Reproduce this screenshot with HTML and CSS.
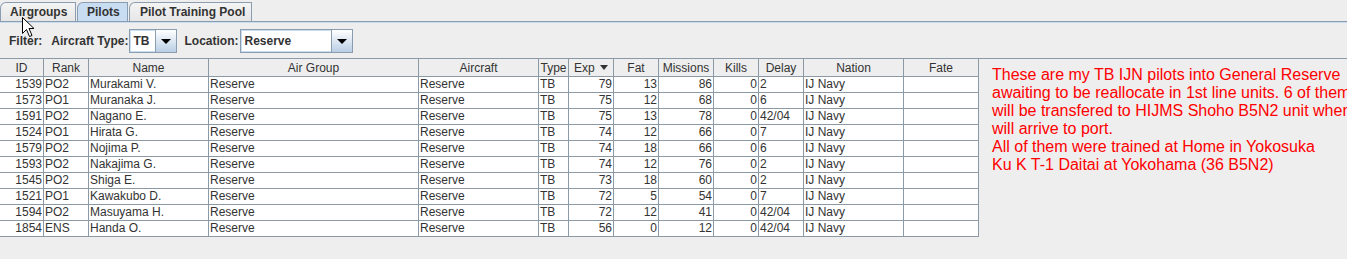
FILE: index.html
```html
<!DOCTYPE html>
<html lang="en">

<head>
  <meta charset="UTF-8">
  <title>Pilots</title>
  <link rel="stylesheet" href="styles.css">
</head>

<body>

  <div id="window">
    <!-- tabs -->
    <div class="tabs">
      <div class="tab">Airgroups</div>
      <div class="tab tab-on">Pilots</div>
      <div class="tab">Pilot Training Pool</div>
    </div>
    <div class="tab-line"></div>

    <!-- filter -->
    <div class="filter">
      <span class="lbl">Filter:</span>
      <span class="lbl">Aircraft Type:</span>
      <div class="combo combo-type">
        <div class="combo-val">TB</div>
        <div class="combo-btn"><span class="tri"></span></div>
      </div>
      <span class="lbl lbl-loc">Location:</span>
      <div class="combo combo-loc">
        <div class="combo-val">Reserve</div>
        <div class="combo-btn"><span class="tri"></span></div>
      </div>
    </div>

    <div class="main">
      <table class="grid">
        <colgroup>
          <col style="width:44px">
          <col style="width:45px">
          <col style="width:120px">
          <col style="width:210px">
          <col style="width:120px">
          <col style="width:30px">
          <col style="width:45px">
          <col style="width:45px">
          <col style="width:55px">
          <col style="width:45px">
          <col style="width:45px">
          <col style="width:100px">
          <col style="width:75px">
        </colgroup>
        <thead>
          <tr>
            <th>ID</th>
            <th>Rank</th>
            <th>Name</th>
            <th>Air Group</th>
            <th>Aircraft</th>
            <th>Type</th>
            <th>Exp <span class="sort"></span></th>
            <th>Fat</th>
            <th>Missions</th>
            <th>Kills</th>
            <th>Delay</th>
            <th>Nation</th>
            <th>Fate</th>
          </tr>
        </thead>
        <tbody>
          <tr><td class="n">1539</td><td>PO2</td><td>Murakami V.</td><td>Reserve</td><td>Reserve</td><td>TB</td><td class="n">79</td><td class="n">13</td><td class="n">86</td><td class="n">0</td><td>2</td><td>IJ Navy</td><td></td></tr>
          <tr><td class="n">1573</td><td>PO1</td><td>Muranaka J.</td><td>Reserve</td><td>Reserve</td><td>TB</td><td class="n">75</td><td class="n">12</td><td class="n">68</td><td class="n">0</td><td>6</td><td>IJ Navy</td><td></td></tr>
          <tr><td class="n">1591</td><td>PO2</td><td>Nagano E.</td><td>Reserve</td><td>Reserve</td><td>TB</td><td class="n">75</td><td class="n">13</td><td class="n">78</td><td class="n">0</td><td>42/04</td><td>IJ Navy</td><td></td></tr>
          <tr><td class="n">1524</td><td>PO1</td><td>Hirata G.</td><td>Reserve</td><td>Reserve</td><td>TB</td><td class="n">74</td><td class="n">12</td><td class="n">66</td><td class="n">0</td><td>7</td><td>IJ Navy</td><td></td></tr>
          <tr><td class="n">1579</td><td>PO2</td><td>Nojima P.</td><td>Reserve</td><td>Reserve</td><td>TB</td><td class="n">74</td><td class="n">18</td><td class="n">66</td><td class="n">0</td><td>6</td><td>IJ Navy</td><td></td></tr>
          <tr><td class="n">1593</td><td>PO2</td><td>Nakajima G.</td><td>Reserve</td><td>Reserve</td><td>TB</td><td class="n">74</td><td class="n">12</td><td class="n">76</td><td class="n">0</td><td>2</td><td>IJ Navy</td><td></td></tr>
          <tr><td class="n">1545</td><td>PO2</td><td>Shiga E.</td><td>Reserve</td><td>Reserve</td><td>TB</td><td class="n">73</td><td class="n">18</td><td class="n">60</td><td class="n">0</td><td>2</td><td>IJ Navy</td><td></td></tr>
          <tr><td class="n">1521</td><td>PO1</td><td>Kawakubo D.</td><td>Reserve</td><td>Reserve</td><td>TB</td><td class="n">72</td><td class="n">5</td><td class="n">54</td><td class="n">0</td><td>7</td><td>IJ Navy</td><td></td></tr>
          <tr><td class="n">1594</td><td>PO2</td><td>Masuyama H.</td><td>Reserve</td><td>Reserve</td><td>TB</td><td class="n">72</td><td class="n">12</td><td class="n">41</td><td class="n">0</td><td>42/04</td><td>IJ Navy</td><td></td></tr>
          <tr><td class="n">1854</td><td>ENS</td><td>Handa O.</td><td>Reserve</td><td>Reserve</td><td>TB</td><td class="n">56</td><td class="n">0</td><td class="n">12</td><td class="n">0</td><td>42/04</td><td>IJ Navy</td><td></td></tr>
        </tbody>
      </table>

      <!-- notes -->
      <div class="notes">
        <p>These are my TB IJN pilots into General Reserve awaiting to be reallocate in 1st line units. 6 of them will be transfered to HIJMS Shoho B5N2 unit when will arrive to port.</p>
        <p>All of them were trained at Home in Yokosuka<br>Ku K T-1 Daitai at Yokohama (36 B5N2)</p>
      </div>
    </div>

    <svg class="cursor" width="13" height="21" viewBox="0 0 13 21">
      <path d="M0.5 0.5 L0.5 16.5 L4.5 12.5 L7.5 19.5 L10 18.5 L7 11.5 L12 11.5 Z" fill="#fff" stroke="#000" stroke-width="1"/>
    </svg>
  </div>

</body>

</html>
```

FILE: styles.css
```css
* {
  margin: 0;
  padding: 0;
  box-sizing: border-box;
}

body {
  background-color: #eeeeee;
  font-family: "Liberation Sans", Arial, sans-serif;
  font-size: 12px;
  color: #333333;
  width: 1347px;
  height: 259px;
  overflow: hidden;
}

#window {
  position: relative;
  height: 259px;
}

/* tabs */
.tabs {
  display: flex;
  height: 21px;
  padding-top: 2px;
}

.tab {
  height: 19px;
  padding: 2px 0 0 9px;
  font-weight: bold;
  white-space: nowrap;
  border: 1px solid #8c9db0;
  border-bottom: none;
  border-top-left-radius: 6px;
  background: linear-gradient(#f4f4f4, #e6e6e6);
  margin-right: 1px;
  line-height: 15px;
}

.tab:first-child {
  width: 76px;
}

.tab-on {
  background: #c8ddf2;
  width: 51px;
}

.tab:last-child {
  width: 123px;
  padding-left: 10px;
}

.tab-line {
  height: 2px;
  border-top: 1px solid #8c9db0;
  background-color: #c8ddf2;
}

/* filter */
.filter {
  display: flex;
  align-items: center;
  height: 36px;
  padding: 1px 0 0 9px;
  border-bottom: 1px solid #8c99a6;
}

.lbl {
  font-weight: bold;
  margin-right: 9px;
}

.lbl-loc {
  margin-left: 7px;
  margin-right: 2px;
}

.combo {
  display: flex;
  height: 24px;
  border: 1px solid #8c9db0;
  background: #fff;
}

.combo-type {
  width: 48px;
  margin-left: -8px;
}

.combo-loc {
  width: 113px;
}

.combo-val {
  flex: 1;
  padding: 3px 0 0 2px;
  font-weight: bold;
  font-size: 12px;
  border: 1px solid #c8ddf2;
  border-right: none;
}

.combo-btn {
  width: 21px;
  border-left: 1px solid #8c9db0;
  background: linear-gradient(#ffffff, #b9cfe5);
  display: flex;
  align-items: center;
  justify-content: center;
}

.tri {
  width: 0;
  height: 0;
  border-left: 5px solid transparent;
  border-right: 5px solid transparent;
  border-top: 5px solid #000;
}

/* table */
.main {
  display: flex;
}

.grid {
  table-layout: fixed;
  border-collapse: collapse;
  width: 980px;
  background: #fff;
  margin-left: -1px;
}

.grid thead tr {
  height: 17px;
}

.grid tbody tr {
  height: 16px;
}

.grid th {
  background-color: #eeeeee;
  font-weight: normal;
  line-height: 14px;
  padding: 1px 0 0 0;
  border: 1px solid #8c99a6;
  border-top: none;
  text-align: center;
  white-space: nowrap;
}

.grid td {
  line-height: 14px;
  padding: 0 1px;
  border: 1px solid #8c99a6;
  white-space: nowrap;
  overflow: hidden;
}

.grid td.n {
  text-align: right;
}

.sort {
  display: inline-block;
  width: 0;
  height: 0;
  border-left: 4px solid transparent;
  border-right: 4px solid transparent;
  border-top: 5px solid #333;
  vertical-align: 2px;
  margin-left: 2px;
}

/* notes */
.notes {
  flex: 1;
  padding: 7px 0 0 13px;
  color: #ff0000;
  font-size: 16px;
  line-height: 18px;
  white-space: nowrap;
  overflow: hidden;
}

.notes p {
  white-space: normal;
  width: 360px;
}

.cursor {
  position: absolute;
  left: 22px;
  top: 17px;
}
```
